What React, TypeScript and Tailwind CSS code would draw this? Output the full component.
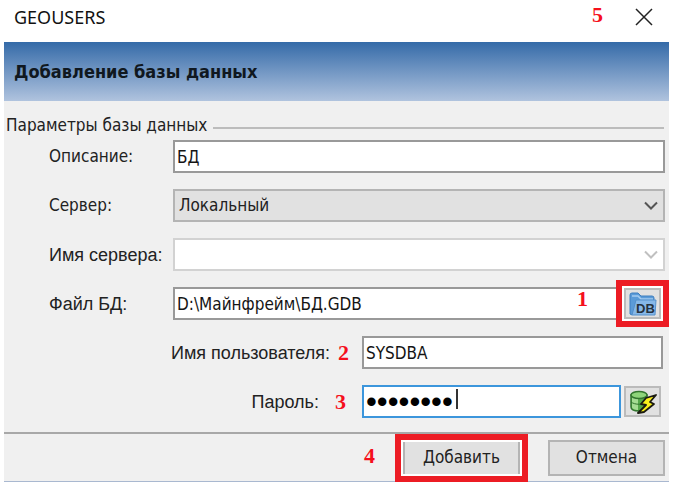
import type { ReactNode } from 'react';

const tahoma = "font-['DejaVu_Sans_Condensed','DejaVu_Sans',sans-serif]";
const sans = "font-['Liberation_Sans',sans-serif]";

function Marker({ children, className = '' }: { children: ReactNode; className?: string }) {
  return (
    <span className={`shrink-0 font-['Liberation_Serif',serif] text-[22px] leading-6 font-bold text-[#f5101c] ${className}`}>
      {children}
    </span>
  );
}

function Chevron({ className = '' }: { className?: string }) {
  return (
    <svg viewBox="0 0 14 9" className={`pointer-events-none absolute top-3 right-[7px] h-[9px] w-[14px] ${className}`}>
      <path d="M1 1.5 7 7.5 13 1.5" fill="none" stroke="currentColor" strokeWidth="2" />
    </svg>
  );
}

function FolderIcon() {
  return (
    <svg viewBox="0 0 28 24" className="h-6 w-7 shrink-0">
      <path d="M1 22V3q0-2 2-2h6l3 3h11q2 0 2 2v4H8L3 23z" fill="#5b9bd8" stroke="#3f7fbf" />
      <path d="M3 4h6l3 3h12" fill="none" stroke="#a5ccf0" strokeWidth="1.5" />
      <path d="M3 23 7 8h20l-1 15z" fill="#86b8e8" stroke="#5590cc" />
      <text x="7" y="21" fontSize="13" fontWeight="700" fontFamily="Liberation Sans, sans-serif" fill="#26323f">
        DB
      </text>
    </svg>
  );
}

function ConnectIcon() {
  return (
    <svg viewBox="0 0 28 24" className="h-6 w-7 shrink-0">
      <path d="M2 5v12c0 3 4 4 8 4s8-1 8-4V5z" fill="#55a84a" stroke="#33752f" strokeWidth="1.5" />
      <path d="M3 7v10c0 2 3 3 6 3V9z" fill="#a5dc93" />
      <ellipse cx="10" cy="5" rx="8" ry="3.500" fill="#8ed47a" stroke="#33752f" strokeWidth="1.5" />
      <path d="M2 12c4 3 12 3 16 0" fill="none" stroke="#33752f" />
      <path d="M27 5 17 8 12 14l5 1-8 8 6-1 10-8-4-2z" fill="#f8ee1b" stroke="#1b1b10" strokeWidth="1.800" strokeLinejoin="round" />
    </svg>
  );
}

export default function App() {
  const field = 'h-[33px] min-w-0 flex-1 border-2 border-[#999] bg-white px-0.5 text-[17px] text-[#151515] outline-none';
  const button = 'h-9 w-[117px] border-2 border-[#b4b4b4] bg-[#e1e1e1] text-[17px] text-[#222]';

  return (
    <main className={`min-h-screen bg-white pr-[5px] pl-1 text-[#222] ${tahoma}`}>
      <header className="flex h-[42px] items-center pr-4 pl-2.5 pb-2">
        <h1 className="flex-1 font-['Noto_Sans',sans-serif] text-lg text-[#111]">GEOUSERS</h1>
        <Marker className="mr-8 -mt-1">5</Marker>
        <button type="button" aria-label="Закрыть" className="text-[#222]">
          <svg viewBox="0 0 18 18" className="h-[18px] w-[18px]">
            <path d="M1 1 17 17M17 1 1 17" fill="none" stroke="currentColor" strokeWidth="1.500" />
          </svg>
        </button>
      </header>

      <div className="flex h-[59px] items-center bg-gradient-to-b from-[#346ba8] to-[#b0c3de] pl-2.5">
        <h2 className="text-lg font-bold text-[#101820]">Добавление базы данных</h2>
      </div>

      <form className="bg-[#f0f0f0]" onSubmit={(e) => e.preventDefault()}>
        <fieldset className="h-[331px] min-w-0">
          <legend className="flex h-[39px] w-full items-center gap-1.5 pt-2.5 pr-[5px] pl-0.5 text-[17px]">
            Параметры базы данных
            <span className="mt-1 h-0.5 flex-1 bg-[#bcbcbc]"></span>
          </legend>

          <div className="flex flex-col gap-4 pr-1 pl-[45px]">
            <div className="flex items-center">
              <label htmlFor="title" className="w-[124px] shrink-0 text-[17px]">Описание:</label>
              <input id="title" defaultValue="БД" className={field} />
            </div>

            <div className="flex items-center">
              <label htmlFor="server" className="w-[124px] shrink-0 text-[17px]">Сервер:</label>
              <div className="relative flex min-w-0 flex-1">
                <select id="server" className="h-[33px] w-full appearance-none border-2 border-[#b4b4b4] bg-[#e1e1e1] px-1 text-[17px]">
                  <option>Локальный</option>
                </select>
                <Chevron className="text-[#555]" />
              </div>
            </div>

            <div className="flex items-center">
              <label htmlFor="host" className={`w-[124px] shrink-0 text-lg whitespace-nowrap ${sans}`}>Имя сервера:</label>
              <div className="relative flex min-w-0 flex-1">
                <select id="host" disabled className="h-[33px] w-full appearance-none border-2 border-[#d2d2d2] bg-white px-1 text-[17px]">
                  <option></option>
                </select>
                <Chevron className="text-[#c0c0c0]" />
              </div>
            </div>

            <div className="flex items-center">
              <label htmlFor="file" className={`w-[124px] shrink-0 text-lg ${sans}`}>Файл БД:</label>
              <div className="relative flex min-w-0 flex-1">
                <input id="file" defaultValue="D:\Майнфрейм\БД.GDB" className={field} />
                <Marker className="absolute top-0 right-9">1</Marker>
              </div>
              <div className="relative mr-1">
                <button type="button" aria-label="Выбрать файл БД" className="flex h-[31px] w-[37px] items-center justify-center border-2 border-[#bbb] bg-[#e1e1e1]">
                  <FolderIcon />
                </button>
                <span className="pointer-events-none absolute -inset-2 border-6 border-[#ec1c24] shadow-[inset_0_0_0_2px_white]"></span>
              </div>
            </div>

            <div className="flex items-center pr-0.5">
              <label htmlFor="user" className={`w-[281px] shrink-0 text-right text-lg whitespace-nowrap ${sans}`}>Имя пользователя:</label>
              <Marker className="w-8 pl-2">2</Marker>
              <input id="user" defaultValue="SYSDBA" className={field} />
            </div>

            <div className="flex items-center pr-1">
              <label htmlFor="password" className={`w-[270px] shrink-0 text-right text-lg ${sans}`}>Пароль:</label>
              <Marker className="w-[43px] pl-4">3</Marker>
              <div className="relative flex min-w-0 flex-1">
                <input id="password" type="password" defaultValue="masterke" className={`h-[33px] w-full border-2 border-[#3c96dc] bg-white px-0.5 text-[31px] leading-7 text-black outline-none ${sans}`} />
                <span className="absolute top-1 left-[94px] h-5 w-0.5 bg-[#333]"></span>
              </div>
              <button type="button" aria-label="Проверить подключение" className="ml-[3px] flex h-[31px] w-[37px] shrink-0 items-center justify-center border-2 border-[#bbb] bg-[#e1e1e1]">
                <ConnectIcon />
              </button>
            </div>
          </div>
        </fieldset>

        <div className="flex h-[50px] items-center justify-end gap-7 border-t-2 border-b border-t-[#a8a8a8] border-b-[#a9b8d0] pr-1">
          <Marker className="-mt-1">4</Marker>
          <div className="relative">
            <button type="submit" className={button}>Добавить</button>
            <span className="pointer-events-none absolute -inset-x-2 -inset-y-1.5 border-6 border-[#ec1c24] shadow-[inset_0_0_0_2px_white]"></span>
          </div>
          <button type="button" className={button}>Отмена</button>
        </div>
      </form>
    </main>
  );
}
